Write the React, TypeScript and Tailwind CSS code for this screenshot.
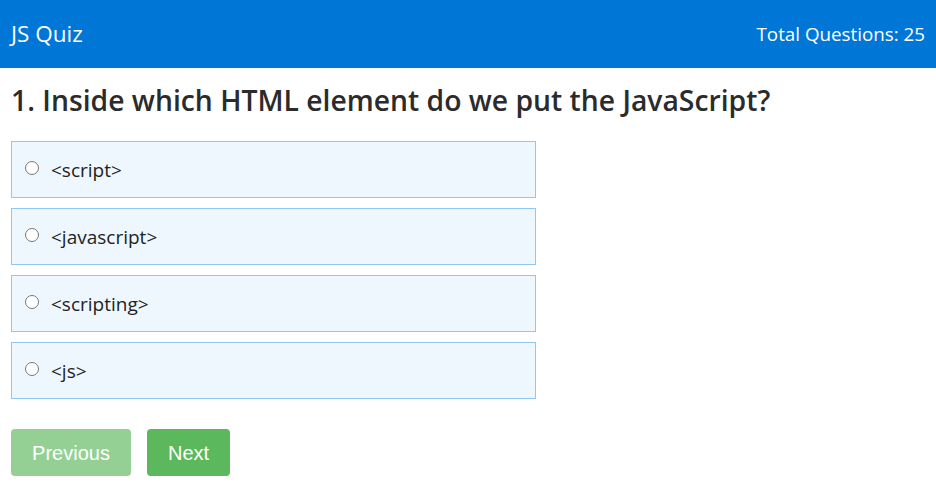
import { useState } from 'react';

const options = ['<script>', '<javascript>', '<scripting>', '<js>'];

export default function App() {
  const [selected, setSelected] = useState<number | null>(null);

  return (
    <div className="min-h-screen bg-white font-['Open_Sans','Noto_Sans',sans-serif] text-[#222]">
      {/* Header */}
      <header className="h-[68px] bg-[#0076d6] text-white flex items-center justify-between px-[11px]">
        <span className="text-[22.5px]">JS Quiz</span>
        <span className="text-[18.8px]">Total Questions: 25</span>
      </header>

      <main className="px-[11px]">
        <h2 className="mt-[14px] text-[28.3px] font-semibold text-[#2b2b2b] leading-[36px]">
          1. Inside which HTML element do we put the JavaScript?
        </h2>

        {/* Answers */}
        <div className="mt-[23px] w-[525px] flex flex-col gap-[10px]">
          {options.map((opt, i) => (
            <label
              key={opt}
              className="h-[57px] flex items-center gap-[12px] px-[13px] bg-[#eff7fe] border border-[#90c8f5] cursor-pointer"
            >
              <input
                type="radio"
                name="q1"
                checked={selected === i}
                onChange={() => setSelected(i)}
                className="m-0 w-[14px] h-[14px] -mt-[4px]"
              />
              <span className="text-[19px] mt-[2px]">{opt}</span>
            </label>
          ))}
        </div>

        {/* Navigation */}
        <div className="mt-[30px] flex gap-[16px] font-['Liberation_Sans',Arial,sans-serif]">
          <button
            disabled
            className="w-[120px] h-[47px] rounded-[4px] bg-[#5cb85c] opacity-65 text-white text-[20px]"
          >
            Previous
          </button>
          <button className="w-[83px] h-[47px] rounded-[4px] bg-[#5cb85c] text-white text-[20px]">
            Next
          </button>
        </div>
      </main>
    </div>
  );
}
